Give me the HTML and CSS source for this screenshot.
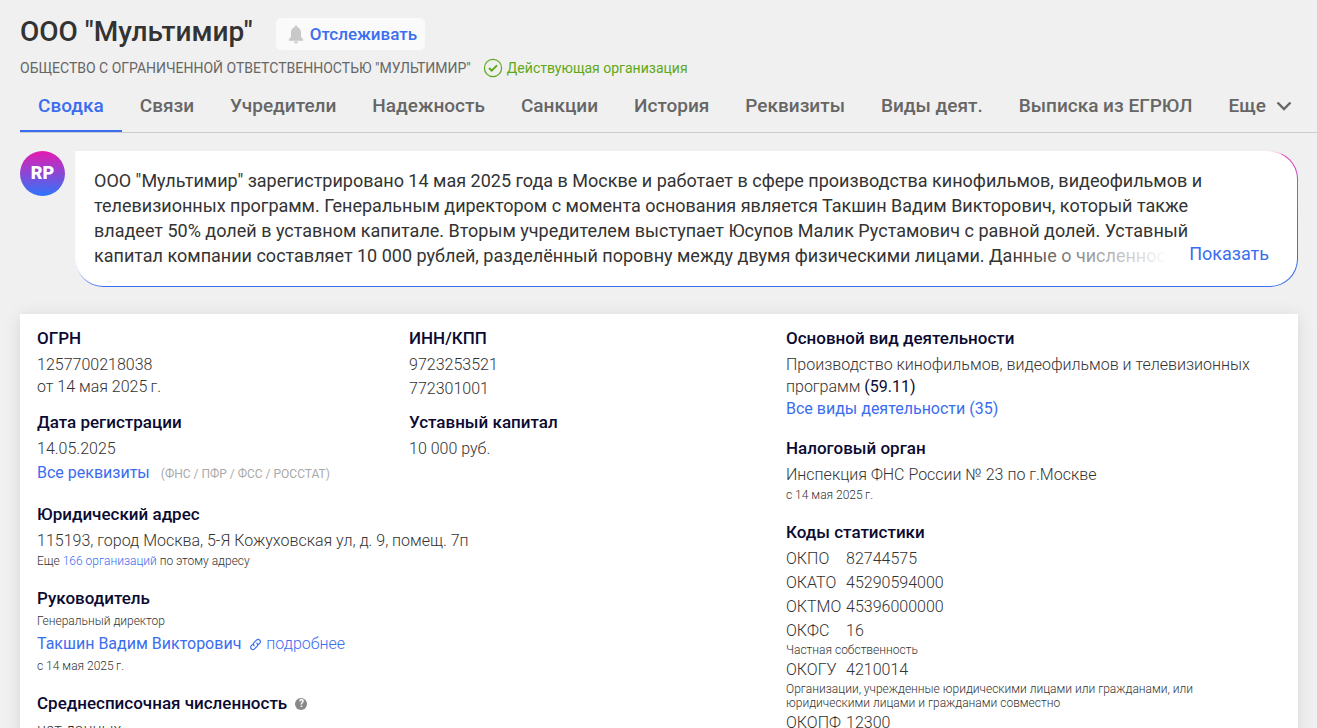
FILE: index.html
```html
<!DOCTYPE html>
<html lang="ru">
<head>
<meta charset="utf-8">
<meta name="viewport" content="width=device-width, initial-scale=1">
<title>ООО "Мультимир"</title>
<link rel="stylesheet" href="styles.css">
</head>
<body>
<header class="company">
  <div class="title-row">
    <h1>ООО "Мультимир"</h1>
    <button class="follow" type="button">
      <svg width="16" height="19" viewBox="0 0 16 19" aria-hidden="true"><path fill="#c8c8c8" d="M8 .5c.8 0 1.300.5 1.300 1.200v.5c2.300.6 3.700 2.500 3.700 5v3.300c0 1.500.6 2.500 2 3.800.7.700.5 1.400-.4 1.400H1.400c-.9 0-1.100-.7-.4-1.400 1.400-1.300 2-2.300 2-3.800V7.200c0-2.500 1.400-4.400 3.700-5v-.5C6.700 1 7.200.5 8 .5zM6 16.500h4c0 1.200-.8 2-2 2s-2-.8-2-2z"/></svg>
      Отслеживать
    </button>
  </div>
  <div class="sub-row">
    <span class="full-name">ОБЩЕСТВО С ОГРАНИЧЕННОЙ ОТВЕТСТВЕННОСТЬЮ "МУЛЬТИМИР"</span>
    <span class="status">
      <svg width="20" height="20" viewBox="0 0 20 20" fill="none" stroke="#5ea818" aria-hidden="true"><circle cx="10" cy="10" r="8.600" stroke-width="1.200"/><path d="M6 10l2.700 2.700L14 7.400" stroke-width="2"/></svg>
      Действующая организация
    </span>
  </div>
</header>
<nav class="tabs">
  <a class="active" href="#">Сводка</a>
  <a href="#">Связи</a>
  <a href="#">Учредители</a>
  <a href="#">Надежность</a>
  <a href="#">Санкции</a>
  <a href="#">История</a>
  <a href="#">Реквизиты</a>
  <a href="#">Виды деят.</a>
  <a href="#">Выписка из ЕГРЮЛ</a>
  <button type="button">Еще <svg width="16" height="10" viewBox="0 0 16 10" fill="none" stroke="#666" stroke-width="2.400" aria-hidden="true"><path d="M1.500 1.500L8 8l6.500-6.500"/></svg></button>
</nav>
<main>
  <section class="summary">
    <div class="avatar">RP</div>
    <div class="bubble">
      <p>ООО "Мультимир" зарегистрировано 14 мая 2025 года в Москве и работает в сфере производства кинофильмов, видеофильмов и<br>
      телевизионных программ. Генеральным директором с момента основания является Такшин Вадим Викторович, который также<br>
      владеет 50% долей в уставном капитале. Вторым учредителем выступает Юсупов Малик Рустамович с равной долей. Уставный<br>
      капитал компании составляет 10 000 рублей, разделённый поровну между двумя физическими лицами. Данные о численности</p>
      <button class="more" type="button">Показать</button>
    </div>
  </section>
  <section class="card">
    <div class="left">
      <div class="pair">
        <div class="block">
          <h2>ОГРН</h2>
          <p>1257700218038<br>от 14 мая 2025&#8201;г.</p>
        </div>
        <div class="block stack">
          <h2>ИНН/КПП</h2>
          <p>9723253521</p>
          <p>772301001</p>
        </div>
        <div class="block stack">
          <h2>Дата регистрации</h2>
          <p>14.05.2025</p>
          <p><a class="strong" href="#">Все реквизиты</a><span class="note">(ФНС / ПФР / ФСС / РОССТАТ)</span></p>
        </div>
        <div class="block">
          <h2>Уставный капитал</h2>
          <p>10 000 руб.</p>
        </div>
      </div>
      <div class="block">
        <h2>Юридический адрес</h2>
        <p>115193, город Москва, 5-Я Кожуховская ул, д. 9, помещ. 7п</p>
        <p class="small">Еще <a href="#">166 организаций</a> по этому адресу</p>
      </div>
      <div class="block person">
        <h2>Руководитель</h2>
        <p class="small">Генеральный директор</p>
        <p><a class="strong" href="#">Такшин Вадим Викторович</a><a class="details" href="#"><svg width="13" height="13" viewBox="0 0 13 13" fill="none" stroke="#3a6df0" stroke-width="1.200" stroke-linecap="round" aria-hidden="true"><path d="M5.200 7.800C4 6.600 4.200 5.500 5 4.700L7.500 2.200c1-1 2.300-1 3.200-.1s.9 2.200-.1 3.200L9.200 6.700M7.800 5.200c1.200 1.200 1 2.300.2 3.100l-2.500 2.500c-1 1-2.300 1-3.200.1s-.9-2.200.1-3.200l1.400-1.400"/></svg>подробнее</a></p>
        <p class="small">с 14 мая 2025&#8201;г.</p>
      </div>
      <div class="block">
        <h2>Среднесписочная численность <button class="help" type="button" aria-label="Пояснение">?</button></h2>
        <p>нет данных</p>
      </div>
    </div>
    <div class="right">
      <div class="block">
        <h2>Основной вид деятельности</h2>
        <p>Производство кинофильмов, видеофильмов и телевизионных<br>программ <b>(59.11)</b></p>
        <p><a class="strong" href="#">Все виды деятельности (35)</a></p>
      </div>
      <div class="block">
        <h2>Налоговый орган</h2>
        <p>Инспекция ФНС России № 23 по г.Москве</p>
        <p class="small">с 14 мая 2025&#8201;г.</p>
      </div>
      <div class="block">
        <h2>Коды статистики</h2>
        <dl class="codes">
          <dt>ОКПО</dt><dd>82744575</dd>
          <dt>ОКАТО</dt><dd>45290594000</dd>
          <dt>ОКТМО</dt><dd>45396000000</dd>
          <dt>ОКФС</dt><dd>16</dd>
          <dd class="hint">Частная собственность</dd>
          <dt>ОКОГУ</dt><dd>4210014</dd>
          <dd class="hint">Организации, учрежденные юридическими лицами или гражданами, или<br>юридическими лицами и гражданами совместно</dd>
          <dt>ОКОПФ</dt><dd>12300</dd>
        </dl>
      </div>
    </div>
  </section>
</main>
</body>
</html>
```
FILE: styles.css
```css
* { box-sizing: border-box; }
html { overflow: hidden; }
body {
  margin: 0;
  height: 100vh;
  overflow: hidden;
  background: #f0f0f0;
  color: #333;
  font-family: Roboto, "Noto Sans", sans-serif;
  font-size: 16px;
  line-height: 22px;
}
h1, h2, p, dl, dd { margin: 0; }
button { border: 0; padding: 0; background: none; font: inherit; color: inherit; cursor: pointer; }
a { color: #3a6df0; text-decoration: none; }

.company { padding: 14px 20px 0; }
.title-row { display: flex; align-items: center; gap: 23px; }
h1 { font-size: 28px; line-height: 36px; font-weight: 500; }
.follow {
  display: flex;
  align-items: center;
  gap: 6px;
  height: 32px;
  margin-top: 4px;
  padding: 0 8px 0 12px;
  border-radius: 5px;
  background: #fafafa;
  color: #3a6df0;
  font-size: 17px;
  font-weight: 500;
}
.sub-row { display: flex; align-items: center; gap: 12px; height: 28px; margin-top: 4px; font-size: 14px; white-space: nowrap; }
.full-name { color: #666; }
.status { display: flex; align-items: center; gap: 4px; color: #5ea818; }

.tabs {
  display: flex;
  margin-left: 20px;
  height: 51px;
  border-bottom: 1px solid #ccc;
  font-size: 19px;
  line-height: 48px;
  font-weight: 500;
  white-space: nowrap;
}
.tabs a, .tabs button { height: 50px; padding: 0 18px; color: #666; }
.tabs a.active { color: #3a6df0; border-bottom: 2px solid #3a6df0; }
.tabs button { display: flex; align-items: center; gap: 10px; height: 48px; }

main { padding: 18px 19px 0 20px; }
.summary { display: flex; gap: 10px; align-items: flex-start; }
.avatar {
  flex: none;
  width: 45px;
  height: 45px;
  border-radius: 50%;
  background: linear-gradient(#e61bb0, #2f74fa);
  color: #fff;
  font-size: 18px;
  line-height: 44px;
  font-weight: 900;
  text-align: center;
}
.bubble {
  position: relative;
  flex: 1;
  min-width: 0;
  padding: 16px 18px 18px;
  border: 1px solid transparent;
  border-radius: 0 28px 28px 28px;
  background:
    linear-gradient(#fff, #fff) padding-box,
    linear-gradient(to right, #fff calc(100% - 30px), transparent) top / 100% 3px no-repeat border-box,
    linear-gradient(to right, #fff, transparent 20px) border-box,
    linear-gradient(#f03cb8, #3a6df0 75%) border-box;
  font-size: 18px;
  line-height: 25px;
}
.bubble p { height: 100px; overflow: hidden; white-space: nowrap; }
.more {
  position: absolute;
  right: 28px;
  bottom: 20px;
  padding-left: 180px;
  background: linear-gradient(to right, rgba(255, 255, 255, 0), #fff 160px);
  color: #3a6df0;
}

.card {
  display: grid;
  grid-template-columns: 749px minmax(0, 1fr);
  margin-top: 27px;
  padding: 13px 17px;
  background: #fff;
  box-shadow: 0 2px 16px rgba(0, 0, 0, .1);
}
.left, .right { display: flex; flex-direction: column; gap: 17px; }
.pair { display: grid; grid-template-columns: 372px 1fr; row-gap: 11px; margin-bottom: 1px; }
h2 { margin-bottom: 5px; color: #0a0a32; font-size: 17px; line-height: 22px; font-weight: 500; }
.block p { font-weight: 300; }
.stack p + p { margin-top: 2px; }
.block .strong { font-weight: 400; }
.block b { color: #0a0a32; font-weight: 400; }
.block .small { font-size: 12px; line-height: 18px; }
.note { margin-left: 11px; color: #aaa; font-size: 12px; font-weight: 400; }
.person .small { margin: -2px 0 3px; }
.person p + .small { margin: 2px 0 0; }
.details { margin-left: 8px; }
.details svg { margin-right: 4px; vertical-align: -2px; }
.help {
  width: 12px;
  height: 12px;
  margin-left: 4px;
  border-radius: 50%;
  background: #888;
  color: #fff;
  font-size: 10px;
  line-height: 12px;
  font-weight: 700;
  vertical-align: 2px;
}
.codes { display: grid; grid-template-columns: 60px 1fr; margin-top: -1px; line-height: 24px; font-weight: 300; }
.codes .hint { grid-column: 1 / -1; padding-bottom: 1px; font-size: 12px; line-height: 14px; }
```
